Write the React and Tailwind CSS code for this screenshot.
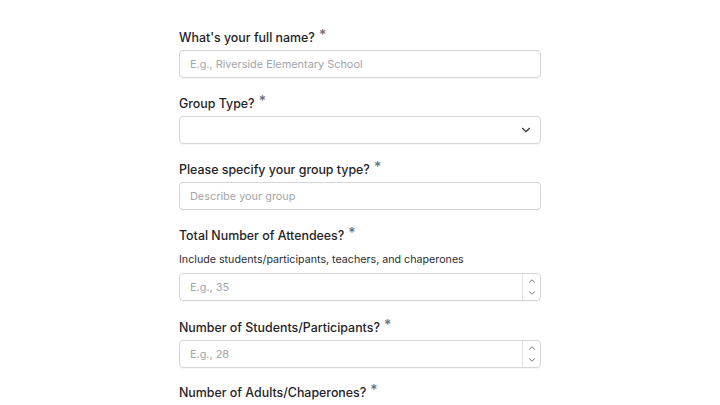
import { ChevronDown, ChevronUp } from "lucide-react";

const font = { fontFamily: "Inter, 'Noto Sans', sans-serif" };

function Label({ children }) {
  return (
    <div className="flex h-5 items-start pt-[1px] text-[12.4px] font-medium leading-[19px] text-[#1f2328]">
      {children}
      <span className="ml-[4px] text-[14px] leading-[13px] text-[#6b6f76]">*</span>
    </div>
  );
}

function TextInput({ placeholder }) {
  return (
    <div className="mt-[3px] flex h-7 items-center rounded-[4px] border border-[#d4d6da] bg-white px-[10px] shadow-[0_1px_1px_rgba(0,0,0,0.04)]">
      <span className="text-[10.9px] text-[#a3a6ab]">{placeholder}</span>
    </div>
  );
}

function NumberInput({ placeholder, className = "mt-[3px]" }) {
  return (
    <div className={`${className} flex h-7 items-stretch rounded-[4px] border border-[#d4d6da] bg-white shadow-[0_1px_1px_rgba(0,0,0,0.04)]`}>
      <div className="flex flex-1 items-center px-[10px] text-[10.9px] text-[#a3a6ab]">{placeholder}</div>
      <div className="flex w-[18px] flex-col items-center justify-center border-l border-[#e1e3e6] text-[#55595f]">
        <ChevronUp size={10} strokeWidth={2} />
        <ChevronDown size={10} strokeWidth={2} className="mt-[2px]" />
      </div>
    </div>
  );
}

export default function App() {
  return (
    <div className="min-h-[405px] w-[720px] overflow-hidden bg-white" style={font}>
      <div className="ml-[179px] w-[362px] pt-[27px]">
        <Label>What's your full name?</Label>
        <TextInput placeholder="E.g., Riverside Elementary School" />

        <div className="mt-[15px]">
          <Label>Group Type?</Label>
          <div className="mt-[3px] flex h-7 items-center justify-end rounded-[4px] border border-[#d4d6da] bg-white pr-[7px] shadow-[0_1px_1px_rgba(0,0,0,0.04)]">
            <ChevronDown size={14} strokeWidth={2} className="text-[#3a3d42]" />
          </div>
        </div>

        <div className="mt-[15px]">
          <Label>Please specify your group type?</Label>
          <TextInput placeholder="Describe your group" />
        </div>

        <div className="mt-[15px]">
          <Label>Total Number of Attendees?</Label>
          <div className="mt-1 h-5 pt-[1px] text-[10.7px] leading-[19px] text-[#2b2e33]">
            Include students/participants, teachers, and chaperones
          </div>
          <NumberInput placeholder="E.g., 35" className="mt-1" />
        </div>

        <div className="mt-[16px]">
          <Label>Number of Students/Participants?</Label>
          <NumberInput placeholder="E.g., 28" />
        </div>

        <div className="mt-[14px]">
          <Label>Number of Adults/Chaperones?</Label>
        </div>
      </div>
    </div>
  );
}
